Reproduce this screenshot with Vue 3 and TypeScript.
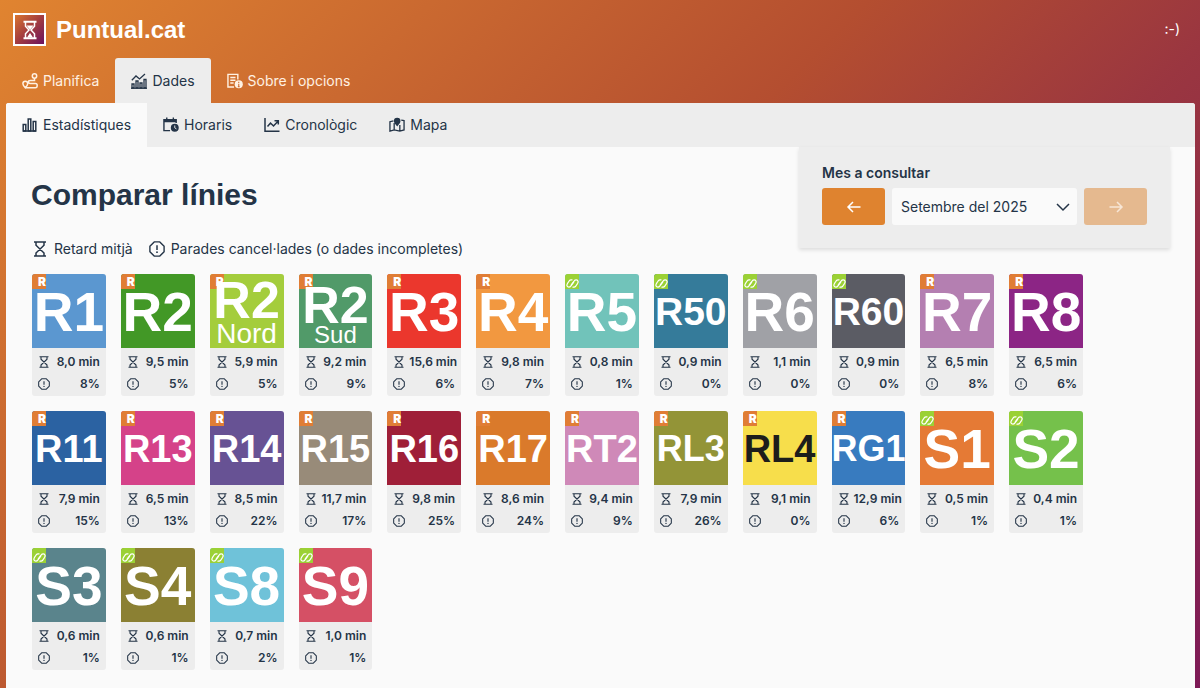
<script setup lang="ts">
import { ref } from 'vue'

type Operator = 'rodalies' | 'fgc'

interface Line {
  name: string
  sub?: string
  color: string
  dark?: boolean
  operator: Operator
  delay: string
  cancelled: string
}

function line(name: string, color: string, operator: Operator, delay: string, cancelled: string, extra: Partial<Line> = {}): Line {
  return { name, color, operator, delay, cancelled, ...extra }
}

const lines: Line[] = [
  line('R1', '#5b97d0', 'rodalies', '8,0', '8%'),
  line('R2', '#429826', 'rodalies', '9,5', '5%'),
  line('R2', '#a4cd3c', 'rodalies', '5,9', '5%', { sub: 'Nord' }),
  line('R2', '#519a69', 'rodalies', '9,2', '9%', { sub: 'Sud' }),
  line('R3', '#eb372d', 'rodalies', '15,6', '6%'),
  line('R4', '#f29840', 'rodalies', '9,8', '7%'),
  line('R5', '#71c3ba', 'fgc', '0,8', '1%'),
  line('R50', '#357b9a', 'fgc', '0,9', '0%'),
  line('R6', '#a0a1a6', 'fgc', '1,1', '0%'),
  line('R60', '#5b5c64', 'fgc', '0,9', '0%'),
  line('R7', '#b47fb1', 'rodalies', '6,5', '8%'),
  line('R8', '#8c2585', 'rodalies', '6,5', '6%'),
  line('R11', '#2b62a2', 'rodalies', '7,9', '15%'),
  line('R13', '#d54289', 'rodalies', '6,5', '13%'),
  line('R14', '#675294', 'rodalies', '8,5', '22%'),
  line('R15', '#988b79', 'rodalies', '11,7', '17%'),
  line('R16', '#9f1f38', 'rodalies', '9,8', '25%'),
  line('R17', '#da7a2b', 'rodalies', '8,6', '24%'),
  line('RT2', '#cf89b8', 'rodalies', '9,4', '9%'),
  line('RL3', '#939437', 'rodalies', '7,9', '26%'),
  line('RL4', '#f7de4b', 'rodalies', '9,1', '0%', { dark: true }),
  line('RG1', '#387bbf', 'rodalies', '12,9', '6%'),
  line('S1', '#e57a35', 'fgc', '0,5', '1%'),
  line('S2', '#75c14b', 'fgc', '0,4', '1%'),
  line('S3', '#5a848c', 'fgc', '0,6', '1%'),
  line('S4', '#8b8033', 'fgc', '0,6', '1%'),
  line('S8', '#6fc2d9', 'fgc', '0,7', '2%'),
  line('S9', '#d55065', 'fgc', '1,0', '1%'),
]

const months = ['Juliol del 2025', 'Agost del 2025', 'Setembre del 2025']
const month = ref(2)
</script>

<template>
  <svg class="sprite" aria-hidden="true">
    <symbol id="hourglass" viewBox="0 0 16 16">
      <path d="M2 1h12M2 15h12M4 1v3.200L12 12v3M12 1v3.200L4 12v3" fill="none" stroke="currentColor" stroke-width="1.500" />
    </symbol>
    <symbol id="warning" viewBox="0 0 16 16">
      <path d="M5.200 .9h5.600l4.300 4.300v5.600l-4.300 4.300H5.200L.9 10.800V5.200z" fill="none" stroke="currentColor" stroke-width="1.400" stroke-linejoin="round" />
      <path d="M8 4.200v4.800" stroke="currentColor" stroke-width="1.500" />
      <circle cx="8" cy="11.200" r=".9" fill="currentColor" />
    </symbol>
    <symbol id="fgc" viewBox="0 0 14 12">
      <g fill="none" stroke="#fff" stroke-width="1.300" stroke-linecap="round">
        <path d="M6.500 2H5.300C4.500 2 4 2.400 3.500 3L1.400 6.200C.2 8.200 1.200 10 3 10c.9 0 1.600-.4 2.100-1.200L8.300 4.500" />
        <path d="M7.500 10h1.200c.8 0 1.300-.4 1.800-1l2.100-3.200C13.800 3.800 12.800 2 11 2c-.9 0-1.600.4-2.100 1.200L5.700 7.500" />
      </g>
    </symbol>
  </svg>

  <div class="page">
    <header class="top">
      <a class="brand" href="#">
        <span class="logo">
          <svg viewBox="0 0 20 20" aria-hidden="true">
            <path d="M3.500 1.800h13M3.500 18.200h13" stroke="#fff" stroke-width="2" />
            <path d="M5.500 2v4.200L9 10l-3.500 3.800V18M14.500 2v4.200L11 10l3.500 3.800V18" fill="none" stroke="#fff" stroke-width="1.500" />
            <path d="M6.500 5.500h7L10 9.800zM10 13l3 4.500H7z" fill="#fff" />
          </svg>
        </span>
        <span>Puntual.cat</span>
      </a>
      <span class="smile">:-)</span>
    </header>

    <nav class="tabs main-tabs" aria-label="Principal">
      <a href="#">
        <svg viewBox="0 0 16 16" class="icon" aria-hidden="true" fill="none" stroke="currentColor" stroke-width="1.500">
          <circle cx="12.500" cy="3" r="2.200" /><path d="M12.500 5.200v2.300H8.300c-2.600 0-2.600 3 0 3h5.200c1.200 0 1.700.7 1.700 2s-.6 2.300-1.800 2.300H3.500" />
          <path d="M3.300 14.800C1.700 13 .9 12 .9 10.700a2.400 2.400 0 0 1 4.800 0c0 1.300-.8 2.300-2.400 4.100z" />
        </svg>
        <span>Planifica</span>
      </a>
      <a href="#" class="active" aria-current="page">
        <svg viewBox="0 0 16 16" class="icon" aria-hidden="true" fill="none" stroke="currentColor" stroke-width="1.300">
          <path d="M.8 7.200 5 3l3.500 3L14 1M1 15v-4h2v4zM5 15V8h2v7zM9 15v-5h2v5zM13 15V6.500h2V15z" /><path d="M0 15.200h16" />
        </svg>
        <span>Dades</span>
      </a>
      <a href="#">
        <svg viewBox="0 0 17 16" class="icon" aria-hidden="true" fill="none" stroke="currentColor" stroke-width="1.500">
          <path d="M7.500 14.300H1V1h10.500v5.500M3.500 4.200H9M3.500 7.200H9M3.500 10.200h3.500" />
          <circle cx="12.500" cy="11.500" r="4.300" fill="currentColor" stroke="none" />
          <path d="M12.500 10.800v3.200M12.500 8.700V10M11.500 14h2" stroke="#ca662e" stroke-width="1.100" />
        </svg>
        <span>Sobre i opcions</span>
      </a>
    </nav>

    <main class="sheet">
      <nav class="tabs sub-tabs" aria-label="Dades">
        <a href="#" class="active" aria-current="page">
          <svg viewBox="0 0 16 16" class="icon" aria-hidden="true" fill="none" stroke="currentColor" stroke-width="1.500">
            <path d="M1.200 14V7.500h2.600V14zM6.200 14V2h2.600v12zM11.200 14V4.500h2.600V14z" /><path d="M1 14.100h13" />
          </svg>
          <span>Estadístiques</span>
        </a>
        <a href="#">
          <svg viewBox="0 0 17 16" class="icon" aria-hidden="true" fill="none" stroke="currentColor" stroke-width="1.500">
            <path d="M7.500 14H1V2.500h13V6M4 0v3.500M11 0v3.500" /><path d="M1 3.700h13" stroke-width="2.600" />
            <circle cx="12.500" cy="11" r="4.200" fill="currentColor" stroke="none" /><path d="M12.500 8.500V11l1.800 1.200" stroke="#ededed" stroke-width="1" />
          </svg>
          <span>Horaris</span>
        </a>
        <a href="#">
          <svg viewBox="0 0 16 16" class="icon" aria-hidden="true" fill="none" stroke="currentColor" stroke-width="1.500">
            <path d="M1 1v13.200h14.500M3.500 9.500l3-3.500 3 3L14 4.200M10.500 3.700h3.800v3.800" />
          </svg>
          <span>Cronològic</span>
        </a>
        <a href="#">
          <svg viewBox="0 0 17 16" class="icon" aria-hidden="true" fill="none" stroke="currentColor" stroke-width="1.400">
            <path d="M4.800 3.500 1 4.500v10l4.500-1.300 6 1.300 4.500-1.300v-10l-3-.4M5.500 6v7.200M11.500 8v6.500" />
            <path d="M8.700 9.500C6.500 7 5.200 5.600 5.200 3.700a3.500 3.500 0 0 1 7 0c0 1.900-1.300 3.300-3.500 5.800z" fill="currentColor" stroke="none" />
          </svg>
          <span>Mapa</span>
        </a>
      </nav>

      <div class="intro">
        <div class="heading">
          <h1>Comparar línies</h1>
          <div class="legend">
            <span class="key"><svg class="icon"><use href="#hourglass" /></svg>Retard mitjà</span>
            <span class="key"><svg class="icon"><use href="#warning" /></svg>Parades cancel·lades (o dades incompletes)</span>
          </div>
        </div>
        <form class="month" @submit.prevent>
          <label for="month">Mes a consultar</label>
          <div class="picker">
            <button type="button" aria-label="Mes anterior" :disabled="month === 0" @click="month--">
              <svg viewBox="0 0 16 16" class="icon"><path d="M14.500 8H2M7 3 2 8l5 5" fill="none" stroke="currentColor" stroke-width="1.500" /></svg>
            </button>
            <div class="select">
              <select id="month" v-model="month">
                <option v-for="(label, i) in months" :key="label" :value="i">{{ label }}</option>
              </select>
              <svg viewBox="0 0 16 16" class="icon chevron" aria-hidden="true"><path d="m2 5 6 6 6-6" fill="none" stroke="currentColor" stroke-width="1.500" /></svg>
            </div>
            <button type="button" aria-label="Mes següent" :disabled="month === months.length - 1" @click="month++">
              <svg viewBox="0 0 16 16" class="icon"><path d="M1.500 8H14M9 3l5 5-5 5" fill="none" stroke="currentColor" stroke-width="1.500" /></svg>
            </button>
          </div>
        </form>
      </div>

      <section class="lines">
        <article v-for="(l, i) in lines" :key="i" class="card">
          <div class="tile" :class="[l.name.toLowerCase(), { long: l.name.length > 2, dark: l.dark, [(l.sub ?? '').toLowerCase()]: l.sub }]" :style="{ background: l.color }">
            <span class="operator" :class="l.operator">
              <template v-if="l.operator === 'rodalies'">R</template>
              <svg v-else aria-hidden="true"><use href="#fgc" /></svg>
            </span>
            <span class="name">{{ l.name }}</span>
            <span v-if="l.sub" class="sub">{{ l.sub }}</span>
          </div>
          <div class="stats">
            <div class="stat"><svg><use href="#hourglass" /></svg><span>{{ l.delay }} min</span></div>
            <div class="stat"><svg><use href="#warning" /></svg><span>{{ l.cancelled }}</span></div>
          </div>
        </article>
      </section>
    </main>
  </div>
</template>

<style>
body {
  margin: 0;
}
</style>

<style scoped>
* {
  box-sizing: border-box;
}
.sprite {
  position: absolute;
  width: 0;
  height: 0;
}
.page {
  display: flex;
  flex-direction: column;
  min-height: 100vh;
  padding: 0 5px 0 6px;
  background: linear-gradient(135deg, #e08430 0%, #b44e30 46%, #9a3640 66%, #7d1a56 100%);
  color: #243447;
  font: 14px/20px Inter, "Liberation Sans", sans-serif;
}
a {
  color: inherit;
  text-decoration: none;
}
.icon {
  width: 16px;
  height: 16px;
  flex: none;
}
.top {
  display: flex;
  align-items: center;
  justify-content: space-between;
  height: 58px;
  padding: 1px 15px 0 7px;
  color: #fff;
}
.brand {
  display: flex;
  align-items: center;
  gap: 10px;
  font: bold 24px/32px "Liberation Sans", Arial, sans-serif;
}
.logo {
  display: grid;
  place-items: center;
  width: 33px;
  height: 33px;
  border: 2px solid #fff;
  background: linear-gradient(135deg, #d9752f, #a23c40 50%, #6a1260);
}
.logo svg {
  width: 20px;
  height: 20px;
}
.tabs {
  display: flex;
}
.tabs a {
  display: flex;
  align-items: center;
  gap: 5px;
  height: 44px;
  padding: 0 16px;
}
.main-tabs {
  color: #fff1e2;
}
.main-tabs a {
  height: 45px;
  border-radius: 3px 3px 0 0;
}
.main-tabs .active {
  background: #ededed;
  color: #243447;
}
.sheet {
  flex: 1;
  border-radius: 3px 3px 0 0;
  background: #fafafa;
  overflow: hidden;
}
.sub-tabs {
  background: #ededed;
}
.sub-tabs .active {
  background: #fafafa;
}
.intro {
  display: flex;
  justify-content: space-between;
  align-items: flex-start;
  padding: 0 25px;
}
.heading {
  padding-top: 28px;
}
h1 {
  margin: 0;
  font: bold 30px/40px "Liberation Sans", Arial, sans-serif;
}
.legend {
  display: flex;
  gap: 16px;
  padding: 24px 0 15px 1px;
}
.key {
  display: flex;
  align-items: center;
  gap: 6px;
}
.month {
  padding: 16px 23px 23px;
  background: #ededed;
  box-shadow: 0 2px 4px rgba(0, 0, 0, 0.12);
}
.month label {
  display: block;
  margin-bottom: 5px;
  font-weight: 600;
}
.picker {
  display: flex;
  gap: 7px;
}
button {
  display: grid;
  place-items: center;
  width: 63px;
  height: 37px;
  padding: 0;
  border: 0;
  border-radius: 3px;
  background: #df832f;
  color: #fff;
}
button:disabled {
  background: #e5b98f;
  color: #f7e6d6;
}
.select {
  position: relative;
  width: 185px;
}
select {
  width: 100%;
  height: 37px;
  padding: 0 32px 0 9px;
  border: 0;
  border-radius: 3px;
  appearance: none;
  background: #fafafa;
  color: inherit;
  font: inherit;
}
.chevron {
  position: absolute;
  top: 11px;
  right: 6px;
  pointer-events: none;
}
.lines {
  display: grid;
  grid-template-columns: repeat(12, minmax(0, 1fr));
  gap: 15px;
  padding: 0 112px 17px 26px;
}
.card {
  border-radius: 3px;
  background: #ededed;
}
.tile {
  position: relative;
  display: flex;
  flex-direction: column;
  align-items: center;
  height: 74px;
  border-radius: 3px 3px 0 0;
  color: #fff;
  font: bold 55px/76px "Liberation Sans", Arial, sans-serif;
}
.long {
  font-size: 38px;
}
.r50,
.r60 {
  font-size: 39px;
}
.rl3,
.rg1 {
  font-size: 36px;
}
.dark {
  color: #1d1d1b;
}
.nord,
.sud {
  font-size: 52px;
  line-height: 40px;
}
.nord {
  padding-top: 6px;
}
.sud {
  padding-top: 11px;
}
.sub {
  position: relative;
  font-size: 28px;
  font-weight: 400;
  line-height: 28px;
}
.sud .sub {
  font-size: 24px;
  line-height: 20px;
}
.name {
  position: relative;
}
.operator {
  position: absolute;
  top: 0;
  left: 0;
  width: 14px;
  height: 15px;
  border-top-left-radius: 3px;
  color: #fff;
  font: 900 12px/15px Inter, "Liberation Sans", sans-serif;
  text-align: right;
}
.rodalies {
  background: #e07d35;
}
.fgc {
  background: #9bd135;
}
.operator svg {
  display: block;
  width: 13px;
  height: 11px;
  margin: 0 0 0 1px;
  transform: translateY(4px);
}
.stats {
  padding: 3px 6px 1px;
  font-size: 12px;
  font-weight: 600;
}
.stat {
  display: flex;
  align-items: center;
  justify-content: space-between;
  gap: 4px;
  height: 22px;
  white-space: nowrap;
}
.stat svg {
  flex: none;
  width: 12px;
  height: 12px;
}
</style>
